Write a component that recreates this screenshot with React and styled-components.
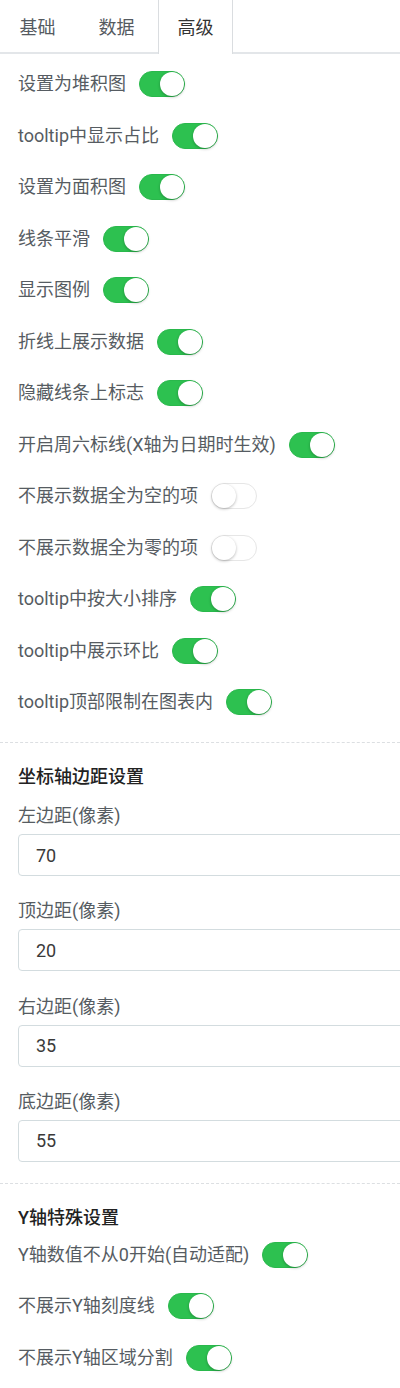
import React, { useState } from "react";
import styled, { createGlobalStyle } from "styled-components";

const GlobalStyle = createGlobalStyle`
  html, body {
    margin: 0;
    padding: 0;
    background: #fff;
    overflow-x: hidden;
  }
  body {
    font-family: Roboto, "Noto Sans CJK SC", sans-serif;
    -webkit-font-smoothing: antialiased;
  }
  * {
    box-sizing: border-box;
  }
`;

const Page = styled.div`
  width: 400px;
  overflow: hidden;
`;

const TabBar = styled.div`
  display: flex;
  height: 54px;
  border-bottom: 2px solid #e3e6e9;
`;

const Tab = styled.div`
  width: 75px;
  height: ${(p) => (p.$active ? "54px" : "52px")};
  margin-right: 4px;
  display: flex;
  align-items: center;
  justify-content: center;
  font-size: 18px;
  color: ${(p) => (p.$active ? "#333" : "#555a5f")};
  background: #fff;
  border: ${(p) => (p.$active ? "1px solid #dadde0" : "none")};
  border-bottom: none;
  border-top: none;
  padding-bottom: ${(p) => (p.$active ? "2px" : "0")};
  cursor: pointer;
`;

const Section = styled.div`
  padding: ${(p) => p.$pad || "0"};
  padding-left: 18px;
  border-bottom: ${(p) => (p.$last ? "none" : "1px dashed #dcdfe2")};
`;

const RowList = styled.div`
  display: flex;
  flex-direction: column;
  gap: 25.5px;
`;

const Row = styled.div`
  display: flex;
  align-items: center;
  height: 26px;
`;

const Label = styled.span`
  font-size: 18px;
  line-height: 26px;
  color: #565c62;
  white-space: nowrap;
  margin-right: 13px;
`;

const Switch = styled.button`
  position: relative;
  flex: none;
  width: 46px;
  height: 26px;
  padding: 0;
  border-radius: 13px;
  border: 1px solid ${(p) => (p.$on ? "#2ab84c" : "#e6e6e6")};
  background: ${(p) => (p.$on ? "#2dc150" : "#fff")};
  cursor: pointer;
  outline: none;

  &::after {
    content: "";
    position: absolute;
    top: 0;
    left: ${(p) => (p.$on ? "20px" : "0")};
    width: 24px;
    height: 24px;
    border-radius: 50%;
    background: #fff;
    box-shadow: 0 1px 3px rgba(0, 0, 0, 0.28);
  }
`;

const Heading = styled.div`
  font-size: 18px;
  line-height: 26px;
  font-weight: 500;
  color: #222;
  margin-bottom: ${(p) => p.$gap || "0"};
`;

const FieldGroup = styled.div`
  display: flex;
  flex-direction: column;
  gap: 22.3px;
  margin-top: 13.5px;
`;

const Field = styled.div`
  display: flex;
  flex-direction: column;
  gap: 5px;
`;

const FieldLabel = styled.label`
  font-size: 18px;
  line-height: 26px;
  color: #565c62;
`;

const Input = styled.input`
  width: 400px;
  height: 42px;
  padding: 0 17px;
  border: 1px solid #d3dcdf;
  border-radius: 4px;
  font-family: inherit;
  font-size: 18px;
  color: #3a3a3a;
  background: #fff;
  outline: none;
`;

const chartOptions = [
  { label: "设置为堆积图", on: true },
  { label: "tooltip中显示占比", on: true },
  { label: "设置为面积图", on: true },
  { label: "线条平滑", on: true },
  { label: "显示图例", on: true },
  { label: "折线上展示数据", on: true },
  { label: "隐藏线条上标志", on: true },
  { label: "开启周六标线(X轴为日期时生效)", on: true },
  { label: "不展示数据全为空的项", on: false },
  { label: "不展示数据全为零的项", on: false },
  { label: "tooltip中按大小排序", on: true },
  { label: "tooltip中展示环比", on: true },
  { label: "tooltip顶部限制在图表内", on: true },
];

const yAxisOptions = [
  { label: "Y轴数值不从0开始(自动适配)", on: true },
  { label: "不展示Y轴刻度线", on: true },
  { label: "不展示Y轴区域分割", on: true },
];

const margins = [
  { label: "左边距(像素)", value: "70" },
  { label: "顶边距(像素)", value: "20" },
  { label: "右边距(像素)", value: "35" },
  { label: "底边距(像素)", value: "55" },
];

function ToggleList({ items }) {
  const [state, setState] = useState(items.map((i) => i.on));
  return (
    <RowList>
      {items.map((item, idx) => (
        <Row key={item.label}>
          <Label>{item.label}</Label>
          <Switch
            $on={state[idx]}
            onClick={() =>
              setState((s) => s.map((v, j) => (j === idx ? !v : v)))
            }
          />
        </Row>
      ))}
    </RowList>
  );
}

export default function App() {
  const [tab, setTab] = useState(2);
  const tabs = ["基础", "数据", "高级"];

  return (
    <Page>
      <GlobalStyle />
      <TabBar>
        {tabs.map((t, i) => (
          <Tab key={t} $active={tab === i} onClick={() => setTab(i)}>
            {t}
          </Tab>
        ))}
      </TabBar>

      <Section $pad="17px 0 27px">
        <ToggleList items={chartOptions} />
      </Section>

      <Section $pad="20.5px 0 21px">
        <Heading>坐标轴边距设置</Heading>
        <FieldGroup>
          {margins.map((m) => (
            <Field key={m.label}>
              <FieldLabel>{m.label}</FieldLabel>
              <Input defaultValue={m.value} />
            </Field>
          ))}
        </FieldGroup>
      </Section>

      <Section $pad="21px 0 40px" $last>
        <Heading $gap="11px">Y轴特殊设置</Heading>
        <ToggleList items={yAxisOptions} />
      </Section>
    </Page>
  );
}
